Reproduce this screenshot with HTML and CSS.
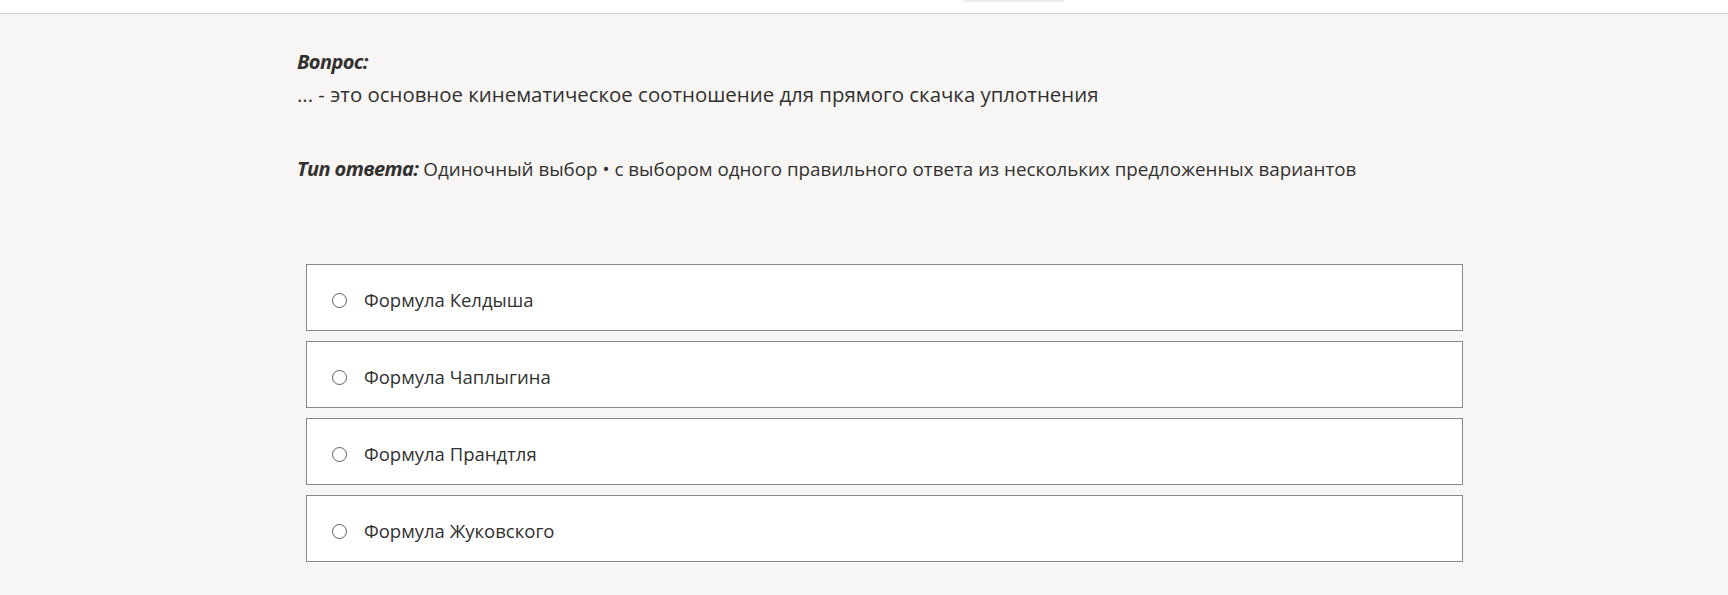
FILE: index.html
```html
<!DOCTYPE html>
<html lang="ru">
<head>
    <meta charset="UTF-8">
    <meta name="viewport" content="width=device-width, initial-scale=1.0">
    <title>Вопрос</title>
    <link rel="stylesheet" href="styles.css">
</head>
<body>
    <header class="topbar">
        <div class="topbar-tab"></div>
    </header>
    <main class="question">
        <div class="q-label">Вопрос:</div>
        <div class="q-text">... - это основное кинематическое соотношение для прямого скачка уплотнения</div>
        <div class="q-type"><span class="q-label">Тип ответа:</span> Одиночный выбор • с выбором одного правильного ответа из нескольких предложенных вариантов</div>

        <form class="options">
            <label class="option">
                <input type="radio" name="answer" value="1">
                <span>Формула Келдыша</span>
            </label>
            <label class="option">
                <input type="radio" name="answer" value="2">
                <span>Формула Чаплыгина</span>
            </label>
            <label class="option">
                <input type="radio" name="answer" value="3">
                <span>Формула Прандтля</span>
            </label>
            <label class="option">
                <input type="radio" name="answer" value="4">
                <span>Формула Жуковского</span>
            </label>
        </form>
    </main>
</body>
</html>
```

FILE: styles.css
```css
body, html {
    font-family: "Open Sans", "Noto Sans", sans-serif;
    margin: 0;
    padding: 0;
    background-color: #f7f6f4;
    color: #323130;
}
.topbar {
    height: 13px;
    background: white;
    border-bottom: 1px solid #d6d6d6;
    display: flex;
}
.topbar-tab {
    width: 100px;
    height: 2px;
    margin-left: 964px;
    border-radius: 0 0 3px 3px;
    background: #ebebeb;
}
.question {
    padding: 34px 0 0 297px;
    font-size: 20px;
    line-height: 28px;
}
.q-label {
    font-size: 20px;
    font-weight: 700;
    font-style: italic;
    letter-spacing: -0.6px;
}
.q-text {
    margin-top: 4px;
    font-size: 20.4px;
}
.q-type {
    margin-top: 47px;
    font-size: 18.8px;
}
.options {
    display: flex;
    flex-direction: column;
    gap: 10px;
    width: 1157px;
    margin: 81px 0 0 9px;
}
.option {
    display: flex;
    align-items: center;
    box-sizing: border-box;
    height: 67px;
    padding: 5px 0 0 25px;
    background: white;
    border: 1px solid #8a8886;
    font-size: 18.5px;
    cursor: pointer;
}
.option input {
    appearance: none;
    width: 15px;
    height: 15px;
    margin: 0 17px 0 0;
    border: 1px solid #605e5c;
    border-radius: 50%;
    background: white;
}
.option input:checked {
    background: radial-gradient(circle, #323130 35%, white 40%);
}
```
